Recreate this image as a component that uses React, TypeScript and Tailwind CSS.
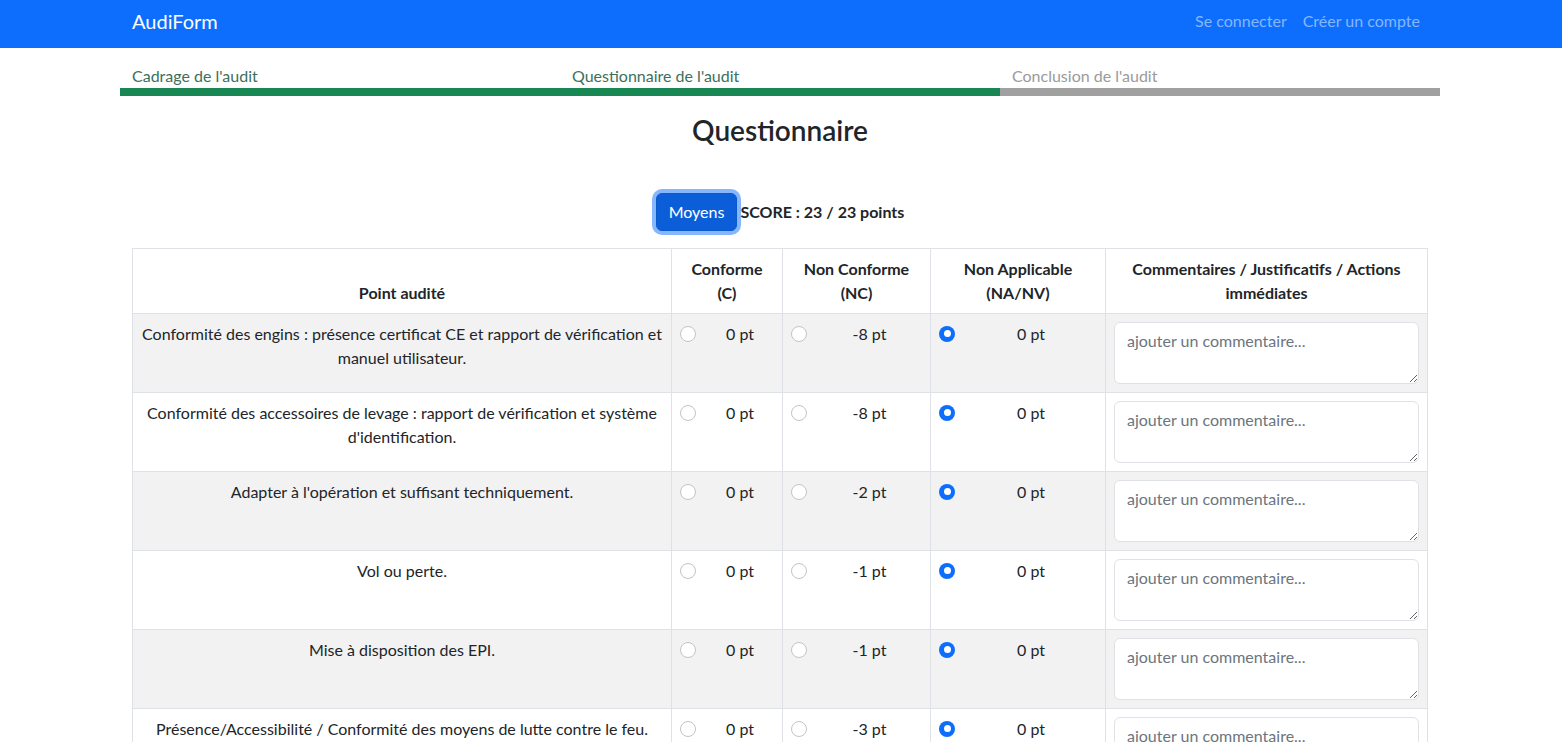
import React from 'react';

const rows = [
  { label: "Conformité des engins : présence certificat CE et rapport de vérification et manuel utilisateur.", nc: -8 },
  { label: "Conformité des accessoires de levage : rapport de vérification et système d'identification.", nc: -8 },
  { label: "Adapter à l'opération et suffisant techniquement.", nc: -2 },
  { label: 'Vol ou perte.', nc: -1 },
  { label: 'Mise à disposition des EPI.', nc: -1 },
  { label: 'Présence/Accessibilité / Conformité des moyens de lutte contre le feu.', nc: -3 },
];

function Radio({ checked }: { checked?: boolean }) {
  if (checked) {
    return (
      <span className="mt-1 flex h-4 w-4 shrink-0 items-center justify-center rounded-full bg-[#0d6efd]">
        <span className="h-[7px] w-[7px] rounded-full bg-white" />
      </span>
    );
  }
  return <span className="mt-1 block h-4 w-4 shrink-0 rounded-full border border-[#c4c4c4] bg-white" />;
}

function Choice({ checked, points }: { checked?: boolean; points: string }) {
  return (
    <div className="flex items-start">
      <Radio checked={checked} />
      <span className="flex-1 pl-[10px] text-center">{points}</span>
    </div>
  );
}

export default function App() {
  return (
    <div className="min-h-screen bg-white pr-[2px] text-[16px] leading-6 text-[#212529] font-['Segoe_UI',Lato,'Liberation_Sans',sans-serif]">
      <nav className="-mr-[2px] h-12 bg-[#0d6efd]">
        <div className="mx-auto flex h-12 w-[1320px] -translate-x-px items-start justify-between px-3">
          <span className="pt-[6px] text-[20px] leading-[30px] text-white">AudiForm</span>
          <div className="flex pt-[9px] text-[#86b7fe]">
            <span className="px-2">Se connecter</span>
            <span className="px-2">Créer un compte</span>
          </div>
        </div>
      </nav>

      <div className="mx-auto w-[1320px] pt-4">
        <div className="grid grid-cols-3">
          <div className="px-3 text-[#3d6f5b]">Cadrage de l'audit</div>
          <div className="px-3 text-[#3d6f5b]">Questionnaire de l'audit</div>
          <div className="px-3 text-[#9a9a9a]">Conclusion de l'audit</div>
        </div>
        <div className="flex h-2">
          <div className="w-[880px] bg-[#198754]" />
          <div className="flex-1 bg-[#a0a0a0]" />
        </div>
      </div>

      <div className="mx-auto w-[1320px] px-3">
        <h3 className="mt-[18px] text-center text-[28px] leading-[1.2] font-semibold">Questionnaire</h3>

        <div className="mt-[45px] flex items-center justify-center">
          <button className="rounded-md border border-[#0a58ca] bg-[#0b5ed7] px-3 py-1.5 text-white shadow-[0_0_0_4px_#86b7fe]">
            Moyens
          </button>
          <span className="ml-[3px] font-bold">SCORE : 23 / 23 points</span>
        </div>

        <table className="mt-[17px] w-full table-fixed border border-[#dee2e6]">
          <thead>
            <tr>
              <th className="w-[539px] border border-[#dee2e6] p-2 align-bottom">Point audité</th>
              <th className="w-[111px] border border-[#dee2e6] p-2 align-bottom">Conforme (C)</th>
              <th className="w-[148px] border border-[#dee2e6] p-2 align-bottom">Non Conforme (NC)</th>
              <th className="w-[175px] border border-[#dee2e6] p-2 align-bottom">Non Applicable (NA/NV)</th>
              <th className="border border-[#dee2e6] p-2 align-bottom">Commentaires / Justificatifs / Actions immédiates</th>
            </tr>
          </thead>
          <tbody>
            {rows.map((r, i) => (
              <tr key={i} className={i % 2 === 0 ? 'bg-[#f2f2f2]' : 'bg-white'}>
                <td className="border border-[#dee2e6] p-2 text-center align-top">{r.label}</td>
                <td className="border border-[#dee2e6] p-2 align-top">
                  <Choice points="0 pt" />
                </td>
                <td className="border border-[#dee2e6] p-2 align-top">
                  <Choice points={`${r.nc} pt`} />
                </td>
                <td className="border border-[#dee2e6] p-2 align-top">
                  <Choice checked points="0 pt" />
                </td>
                <td className="border border-[#dee2e6] p-2 align-top">
                  <textarea
                    rows={2}
                    placeholder="ajouter un commentaire..."
                    className="block h-[62px] w-full resize-y rounded-md border border-[#dee2e6] bg-white px-3 py-1.5 placeholder:text-[#6c757d]"
                  />
                </td>
              </tr>
            ))}
          </tbody>
        </table>
      </div>
    </div>
  );
}
